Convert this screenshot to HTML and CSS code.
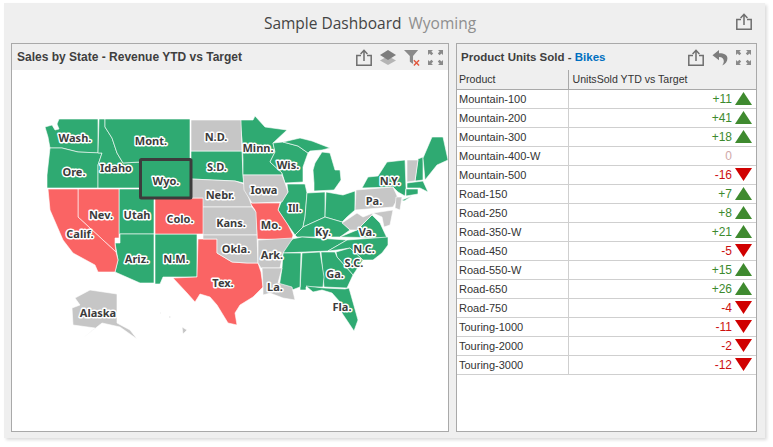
FILE: index.html
```html
<!DOCTYPE html>
<html lang="en">
<head>
<meta charset="utf-8">
<title>Sample Dashboard</title>
<link rel="stylesheet" href="styles.css">
</head>
<body>
<svg class="defs" width="0" height="0" aria-hidden="true">
  <symbol id="i-export" viewBox="0 0 16 17">
    <path d="M5 6.500H.8v9.700h14.400V6.500H11" fill="none" stroke="currentColor" stroke-width="1.500"/>
    <path d="M8 12V1.500M4.600 4.900 8 1.300l3.400 3.600" fill="none" stroke="currentColor" stroke-width="1.500"/>
  </symbol>
  <symbol id="i-expand" viewBox="0 0 15 15">
    <path d="M0 0h5L3.400 1.600 5.200 3.400 3.400 5.200 1.600 3.400 0 5zM15 0v5l-1.600-1.600-1.800 1.800-1.800-1.800 1.800-1.800L10 0zM0 15v-5l1.600 1.600 1.800-1.800 1.800 1.800-1.800 1.800L5 15zM15 15h-5l1.600-1.600-1.800-1.800 1.800-1.800 1.800 1.800L15 10z" fill="#8a8a8a"/>
  </symbol>
</svg>
<main class="dash">
  <header class="dash-head">
    <div class="dash-title">Sample Dashboard<span class="dash-sub">Wyoming</span></div>
    <svg class="ic ic-top"><use href="#i-export"/></svg>
  </header>
  <div class="panels">
    <section class="panel panel-map">
      <div class="panel-head">
        <h2 class="panel-title">Sales by State - Revenue YTD vs Target</h2>
        <div class="tools">
          <svg class="ic"><use href="#i-export"/></svg>
          <svg class="ic" viewBox="0 0 16 16"><path d="M8 6.500 16 11l-8 4.600L0 11z" fill="#b5b5b5"/><path d="M8 .6 16 5.500 8 10.400 0 5.500z" fill="#7d7d7d"/></svg>
          <svg class="ic" viewBox="0 0 17 17"><path d="M0 .5h15L9.600 7v8.500l-3.400-2.500V7z" fill="#8a8a8a"/><path d="m10.500 11.500 5.500 5.500m0-5.500L10.500 17" stroke="#e2583e" stroke-width="1.500"/></svg>
          <svg class="ic ic-exp"><use href="#i-expand"/></svg>
        </div>
      </div>
      <svg class="map" viewBox="12 70 436 361" role="img" aria-label="Map of US states">
        <g class="g">
          <polygon points="59,119 98,119 98,153 78,152 62,148 50,148 48,137 45,127 52,125 55,130 59,129 57,124"/>
          <polygon points="50,148 62,148 78,152 102,153 98,165 98,188 47,188 47,175"/>
          <polygon points="99,119 105,119 105,127 112,138 117,153 123,163 140,162 140,188 98,188 98,165 102,153 98,153"/>
          <polygon points="105,119 190,119 190,160 140,160 140,162 123,163 117,153 112,138 105,127"/>
          <polygon points="140,160 191,160 191,198 140,198"/>
          <polygon points="119,189 140,189 140,198 154,198 154,234 119,234"/>
          <polygon points="120,234 154,234 154,283 140,283 115,272 118,260 115,243 120,243"/>
          <polygon points="155,234 197,234 197,277 163,277 160,284 155,284"/>
          <polygon points="191,151 242,151 243,175 244,183 235,181 191,179"/>
          <polygon points="240,120 253,120 255,116 265,127 287,130 273,143 275,152 270,162 282,173 282,175 243,175 243,160 242,140"/>
          <polygon points="273,143 283,142 298,146 308,153 303,167 303,182 285,183 282,173 270,162 275,152"/>
          <polygon points="283,142 300,138 312,141 330,148 322,150 310,151 308,153 298,146"/>
          <polygon points="314,183 313,170 315,163 322,152 330,153 335,170 340,170 341,180 334,190 314,191"/>
          <polygon points="287,184 305,184 307,193 305,217 303,227 295,235 288,225 278,210 282,200 288,192"/>
          <polygon points="307,193 325,192 325,217 303,227 305,217"/>
          <polygon points="326,192 343,195 355,191 355,210 347,217 342,222 325,217"/>
          <polygon points="303,227 325,217 342,222 350,230 340,237 297,237 295,235"/>
          <polygon points="292,239 302,237 347,240 328,251 283,253 286,245"/>
          <polygon points="340,237 357,230 372,215 380,223 387,238"/>
          <polygon points="347,240 388,237 388,245 382,253 373,260 363,260 350,248 337,250 328,251"/>
          <polygon points="336,252 350,248 363,260 353,275 337,257"/>
          <polygon points="321,252 335,252 337,257 353,275 347,288 324,287"/>
          <polygon points="302,253 320,252 324,277 323,287 306,287 306,290 300,290"/>
          <polygon points="283,253 301,253 300,287 292,290 279,288 282,268"/>
          <polygon points="306,286 324,288 345,289 349,288 358,320 354,331 342,313 340,302 332,293 322,290 313,292"/>
          <polygon points="362,188 368,177 378,176 387,162 405,160 406,188 405,196 398,192 393,187"/>
          <polygon points="418,159 423,157 423,180 415,181"/>
          <polygon points="423,158 432,137 443,137 448,160 437,165 425,180"/>
          <polygon points="407,183 423,181 428,192 420,188 407,188"/>
          <polygon points="406,189 418,189 418,194 406,196"/>
          <polygon points="402,200 412,196 404,201"/>
        </g>
        <g class="r">
          <polygon points="78,189 119,189 119,238 115,238 115,244 116,252 78,217"/>
          <polygon points="48,189 78,189 78,217 116,252 118,260 115,272 98,272 95,265 73,253 63,240 50,210"/>
          <polygon points="155,198 204,198 204,234 155,234"/>
          <polygon points="198,239 217,239 217,253 232,262 247,263 258,263 261,272 263,287 253,297 240,305 235,313 237,325 228,323 217,305 210,297 200,294 195,302 187,293 173,278 197,277"/>
          <polygon points="250,203 280,203 278,210 288,225 293,235 292,240 257,239 257,235 255,210"/>
        </g>
        <g class="s">
          <polygon points="191,120 241,120 242,151 191,151"/>
          <polygon points="191,179 235,181 244,184 252,207 203,207 203,198 191,198"/>
          <polygon points="243,175 282,175 285,183 288,192 282,202 252,203 244,190"/>
          <polygon points="203,207 252,207 256,212 257,235 203,235"/>
          <polygon points="203,235 257,235 258,263 247,263 232,262 217,253 217,239 203,239"/>
          <polygon points="258,240 293,238 283,253 280,268 261,268 258,263"/>
          <polygon points="262,268 282,268 278,283 292,287 295,300 283,298 270,293 263,295 263,287"/>
          <polygon points="356,190 393,187 398,198 393,207 355,210"/>
          <polygon points="396,197 402,197 400,210 395,208"/>
          <polygon points="342,223 357,213 363,217 373,213 372,215 357,230 350,230"/>
          <polygon points="373,213 393,210 390,225 384,227 382,217"/>
          <polygon points="407,160 418,160 415,181 407,182"/>
          <polygon points="75,298 90,290 117,294 117,323 130,330 137,339 120,327 102,323 83,338 95,328 73,325 72,308 80,305"/>
          <polygon points="182,327 187,330 183,334"/>
          <polygon points="160,312 161,313 160,314"/>
          <polygon points="169,316 171,317 169,318"/>
        </g>
        <rect class="sel" x="140.500" y="159.500" width="50.500" height="38.500" rx="1"/>
        <g class="lbl">
          <text x="75" y="142">Wash.</text><text x="151" y="145">Mont.</text><text x="216" y="141">N.D.</text>
          <text x="258" y="152">Minn.</text><text x="74" y="176">Ore.</text><text x="116" y="172">Idaho</text>
          <text x="166" y="185">Wyo.</text><text x="217" y="171">S.D.</text><text x="288" y="169">Wis.</text>
          <text x="390" y="185">N.Y.</text><text x="264" y="194">Iowa</text><text x="220" y="199">Nebr.</text>
          <text x="374" y="205">Pa.</text><text x="101" y="219">Nev.</text><text x="137" y="219">Utah</text>
          <text x="180" y="223">Colo.</text><text x="231" y="227">Kans.</text><text x="295" y="212">Ill.</text>
          <text x="271" y="229">Mo.</text><text x="323" y="236">Ky.</text><text x="367" y="236">Va.</text>
          <text x="80" y="238">Calif.</text><text x="364" y="253">N.C.</text><text x="236" y="253">Okla.</text>
          <text x="272" y="259">Ark.</text><text x="354" y="267">S.C.</text><text x="137" y="263">Ariz.</text>
          <text x="176" y="263">N.M.</text><text x="335" y="278">Ga.</text><text x="223" y="287">Tex.</text>
          <text x="275" y="291">La.</text><text x="342" y="311">Fla.</text><text x="98" y="317">Alaska</text>
        </g>
      </svg>
    </section>
    <section class="panel panel-grid">
      <div class="panel-head">
        <h2 class="panel-title">Product Units Sold - <span class="accent">Bikes</span></h2>
        <div class="tools">
          <svg class="ic"><use href="#i-export"/></svg>
          <svg class="ic" viewBox="0 0 15 17"><path d="M6.500 1 0 6.300l6.500 5V8c3.200 0 5 1.800 4.800 4.500-.1 1.500-.8 3-1.800 4 3.600-1.200 5.500-4 5.400-7.200C14.800 5.800 11.500 4.200 6.500 4.300z" fill="#7d7d7d"/></svg>
          <svg class="ic ic-exp"><use href="#i-expand"/></svg>
        </div>
      </div>
      <table class="grid">
        <thead><tr><th>Product</th><th>UnitsSold YTD vs Target</th></tr></thead>
        <tbody>
          <tr><td>Mountain-100</td><td class="v pos">+11<i class="up"></i></td></tr>
          <tr><td>Mountain-200</td><td class="v pos">+41<i class="up"></i></td></tr>
          <tr><td>Mountain-300</td><td class="v pos">+18<i class="up"></i></td></tr>
          <tr><td>Mountain-400-W</td><td class="v zero">0<i class="none"></i></td></tr>
          <tr><td>Mountain-500</td><td class="v neg">-16<i class="down"></i></td></tr>
          <tr><td>Road-150</td><td class="v pos">+7<i class="up"></i></td></tr>
          <tr><td>Road-250</td><td class="v pos">+8<i class="up"></i></td></tr>
          <tr><td>Road-350-W</td><td class="v pos">+21<i class="up"></i></td></tr>
          <tr><td>Road-450</td><td class="v neg">-5<i class="down"></i></td></tr>
          <tr><td>Road-550-W</td><td class="v pos">+15<i class="up"></i></td></tr>
          <tr><td>Road-650</td><td class="v pos">+26<i class="up"></i></td></tr>
          <tr><td>Road-750</td><td class="v neg">-4<i class="down"></i></td></tr>
          <tr><td>Touring-1000</td><td class="v neg">-11<i class="down"></i></td></tr>
          <tr><td>Touring-2000</td><td class="v neg">-2<i class="down"></i></td></tr>
          <tr><td>Touring-3000</td><td class="v neg">-12<i class="down"></i></td></tr>
        </tbody>
      </table>
    </section>
  </div>
</main>
</body>
</html>
```
FILE: styles.css
```css
* { box-sizing: border-box; }
html, body { margin: 0; padding: 0; background: #fff; }
body { width: 773px; height: 447px; overflow: hidden; padding: 3px 0 0 4px; font-family: "Liberation Sans", Arial, sans-serif; }
.defs { position: absolute; }
.dash { width: 761px; height: 435px; background: #efefef; box-shadow: 2px 2px 3px #dcdcdc; padding: 0 8px 6px 7px; display: flex; flex-direction: column; }
.dash-head { height: 40px; flex: none; display: flex; align-items: center; justify-content: center; position: relative; padding-right: 28px; }
.dash-title { font-family: "Open Sans", sans-serif; font-size: 15.500px; color: #444; }
.dash-sub { color: #8e8e8e; margin-left: 7px; }
.ic { width: 16px; height: 17px; color: #6e6e6e; display: block; flex: none; }
.ic-top { position: absolute; right: 5px; top: 10px; }
.ic-exp { width: 15px; height: 15px; }
.panels { flex: 1; display: flex; gap: 7px; min-height: 0; }
.panel { border: 1px solid #a9a9a9; background: #fff; display: flex; flex-direction: column; }
.panel-map { width: 438px; }
.panel-grid { width: 301px; }
.panel-head { height: 26px; flex: none; background: #efefef; display: flex; align-items: center; justify-content: space-between; padding: 0 5px 0 5px; }
.panel-grid .panel-head { padding-left: 4px; }
.panel-title { margin: 0; font-family: "Liberation Sans", sans-serif; font-size: 12px; font-weight: 700; color: #3f3f3f; white-space: nowrap; }
.panel-grid .panel-title { font-size: 11.500px; }
.accent { color: #0070c0; }
.tools { display: flex; align-items: center; gap: 8px; }
.map { display: block; width: 436px; height: 361px; }
.g polygon { fill: #2faa72; stroke: #fff; stroke-width: .6; }
.r polygon { fill: #fa6464; stroke: #fff; stroke-width: .6; }
.s polygon { fill: #c6c6c6; stroke: #fff; stroke-width: .6; }
.sel { fill: none; stroke: #3c3c3c; stroke-width: 3; }
.lbl text { font-family: "Noto Sans", sans-serif; font-size: 11px; font-weight: 700; fill: #3c3c3c; stroke: #fff; stroke-width: 3px; stroke-linejoin: round; paint-order: stroke; text-anchor: middle; }
.grid { width: 100%; border-collapse: collapse; table-layout: fixed; font-size: 11px; color: #333; }
.grid th { height: 19px; background: #efefef; font-weight: 400; text-align: left; padding: 0 3px 1px 2px; border-bottom: 1px solid #a9a9a9; font-size: 10.600px; }
.grid th:first-child { width: 111px; border-right: 1px solid #a9a9a9; }
.grid th + th { padding-left: 4px; }
.grid td { height: 19px; padding: 0 3px 0 2px; border-bottom: 1px solid #cfcfcf; }
.grid td:first-child { border-right: 1px solid #cfcfcf; }
.v { text-align: right; }
.grid td.v { padding: 1px 4px 0 0; font-size: 12px; }
.pos { color: #3c8a2e; }
.neg { color: #cc1010; }
.zero { color: #d0a8a8; }
.up, .down, .none { display: inline-block; width: 17px; height: 13px; margin-left: 3px; vertical-align: -2px; }
.up { background: #3f8a2f; clip-path: polygon(50% 0, 100% 100%, 0 100%); }
.down { background: #d00000; clip-path: polygon(0 0, 100% 0, 50% 100%); }
```
